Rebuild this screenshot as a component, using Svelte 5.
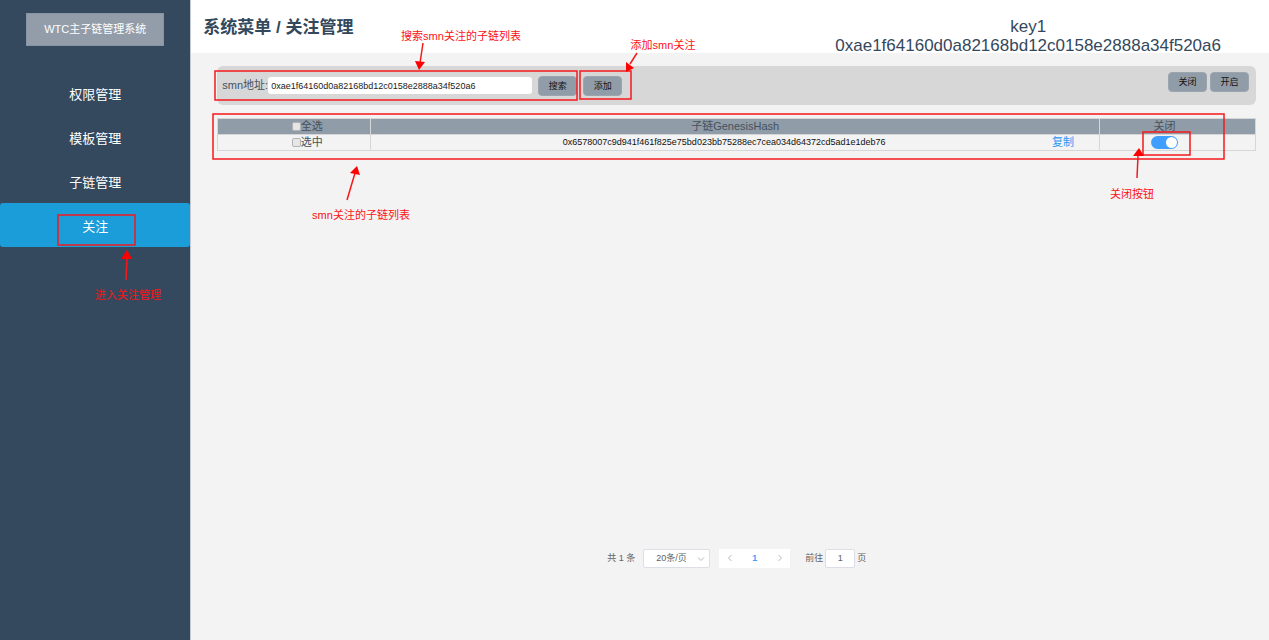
<script>
  const menu = ['权限管理', '模板管理', '子链管理', '关注'];
  let active = $state('关注');
  let address = $state('0xae1f64160d0a82168bd12c0158e2888a34f520a6');
  let pageSize = $state('20条/页');
  let target = $state('1');
  let rows = $state([
    { hash: '0x6578007c9d941f461f825e75bd023bb75288ec7cea034d64372cd5ad1e1deb76', picked: false, on: true }
  ]);

  const boxes = [
    { x: 215, y: 71, w: 362, h: 29 },
    { x: 580, y: 71, w: 51, h: 28 },
    { x: 213, y: 114, w: 1011, h: 45 },
    { x: 1143, y: 132, w: 47, h: 23 },
    { x: 58, y: 215, w: 77, h: 30 }
  ];
  const arrows = [
    { line: 'M423 43 L420 63', head: '415,61 425,62 419,70' },
    { line: 'M637 53 L630 64', head: '626,62 634,68 626,72' },
    { line: 'M347 200 L355 173', head: '350,173 360,175 357,166' },
    { line: 'M1137 178 L1138 156', head: '1133,156 1144,156 1139,148' },
    { line: 'M126 280 L127 258', head: '121,259 132,259 127,250' }
  ];
  const notes = [
    { x: 461, y: 40, text: '搜索smn关注的子链列表' },
    { x: 663, y: 49, text: '添加smn关注' },
    { x: 361, y: 219, text: 'smn关注的子链列表' },
    { x: 1132, y: 198, text: '关闭按钮' },
    { x: 128, y: 299, text: '进入关注管理' }
  ];

  function toggleAll(e) {
    rows.forEach((r) => (r.picked = e.currentTarget.checked));
  }
</script>

<div class="app">
  <aside>
    <div class="brand">WTC主子链管理系统</div>
    <nav>
      {#each menu as item}
        <a href="#menu" class:active={item === active} onclick={() => (active = item)}>{item}</a>
      {/each}
    </nav>
  </aside>

  <main>
    <header>
      <h1>系统菜单 / 关注管理</h1>
      <div class="account">
        <div>key1</div>
        <div>0xae1f64160d0a82168bd12c0158e2888a34f520a6</div>
      </div>
    </header>

    <section class="content">
      <div class="toolbar">
        <form onsubmit={(e) => e.preventDefault()}>
          <label for="address">smn地址:</label>
          <input id="address" type="text" bind:value={address} />
          <button type="submit">搜索</button>
          <button type="button">添加</button>
        </form>
        <div class="bulk">
          <button type="button">关闭</button>
          <button type="button">开启</button>
        </div>
      </div>

      <table>
        <colgroup><col class="c-pick" /><col /><col class="c-switch" /></colgroup>
        <thead>
          <tr>
            <th><label class="pick"><input type="checkbox" onchange={toggleAll} />全选</label></th>
            <th>子链GenesisHash</th>
            <th><span class="off">关闭</span></th>
          </tr>
        </thead>
        <tbody>
          {#each rows as row}
            <tr>
              <td><label class="pick"><input type="checkbox" bind:checked={row.picked} />选中</label></td>
              <td>
                <div class="hash"><span>{row.hash}</span><a href="#copy">复制</a></div>
              </td>
              <td><div class="switch-cell"><input class="switch" type="checkbox" role="switch" aria-label="关闭" bind:checked={row.on} /></div></td>
            </tr>
          {/each}
        </tbody>
      </table>

      <div class="pagination">
        <span class="total">共 1 条</span>
        <div class="size">
          <select aria-label="条/页" bind:value={pageSize}>
            <option>20条/页</option>
          </select>
          <svg width="8" height="8" viewBox="0 0 8 8" aria-hidden="true"><path d="M1 2.5 L4 5.5 L7 2.5" /></svg>
        </div>
        <div class="pager">
          <button type="button" aria-label="‹"><svg width="8" height="8" viewBox="0 0 8 8"><path d="M5.5 1 L2.5 4 L5.5 7" /></svg></button>
          <button type="button" class="current">1</button>
          <button type="button" aria-label="›"><svg width="8" height="8" viewBox="0 0 8 8"><path d="M2.5 1 L5.5 4 L2.5 7" /></svg></button>
        </div>
        <label class="jump">前往<input type="text" bind:value={target} />页</label>
      </div>
    </section>
  </main>

  <div class="notes">
    <svg width="1269" height="640" viewBox="0 0 1269 640">
      {#each boxes as b}
        <rect x={b.x} y={b.y} width={b.w} height={b.h} />
      {/each}
      {#each arrows as a}
        <path d={a.line} />
        <polygon points={a.head} />
      {/each}
      {#each notes as n}
        <text x={n.x} y={n.y}>{n.text}</text>
      {/each}
    </svg>
  </div>
</div>

<style>
  :global(body) {
    margin: 0;
  }
  .app {
    position: relative;
    display: grid;
    grid-template-columns: 15% 1fr;
    min-height: 100vh;
    background: #f3f3f3;
    color: #44525f;
    font: 11px/15px "Liberation Sans", "Noto Sans CJK SC", sans-serif;
  }
  .app * {
    box-sizing: border-box;
  }
  button, input, select {
    font: inherit;
    margin: 0;
    padding: 0;
    border: 0;
  }
  a {
    text-decoration: none;
  }
  aside {
    padding-top: 13px;
    background: #35495e;
    color: #fff;
    text-align: center;
  }
  .brand {
    margin: 0 26px 25px;
    border: 1px solid #8794a2;
    background: #929da9;
    line-height: 31px;
  }
  nav a {
    display: block;
    height: 44px;
    border-radius: 3px;
    color: #fff;
    font-size: 13px;
    line-height: 47px;
  }
  nav a.active {
    background: #1b9dd9;
  }
  main {
    display: flex;
    flex-direction: column;
    min-width: 0;
    border-left: 1px solid #c4cad0;
  }
  header {
    display: flex;
    justify-content: space-between;
    height: 53px;
    padding: 0 48px 0 12px;
    background: #fff;
    color: #34485c;
  }
  h1 {
    margin: 0;
    font-size: 17px;
    line-height: 56px;
  }
  .account {
    padding-top: 17px;
    font-size: 17px;
    line-height: 19px;
    text-align: center;
  }
  .content {
    flex: 1;
    display: flex;
    flex-direction: column;
    padding: 13px 13px 72px 26px;
  }
  .toolbar {
    display: flex;
    justify-content: space-between;
    height: 39px;
    border-radius: 6px;
    background: #d7d7d7;
  }
  form {
    display: flex;
    align-items: center;
    padding-left: 5px;
  }
  form input {
    width: 264px;
    height: 17px;
    margin-right: 6px;
    padding: 0 3px;
    border-radius: 3px;
    background: #fff;
    color: #222;
    font-size: 9px;
  }
  .toolbar button {
    width: 39px;
    height: 20px;
    border: 1px solid #9aa5b0;
    border-radius: 4px;
    background: #909ca8;
    color: #111;
    font-size: 9px;
    line-height: 18px;
  }
  form button + button {
    margin-left: 6px;
  }
  .bulk {
    display: flex;
    gap: 3px;
    padding: 6px 7px;
  }
  table {
    width: 100%;
    margin-top: 13px;
    border-collapse: collapse;
    border: 1px solid #d6d6d6;
    table-layout: fixed;
  }
  .c-pick {
    width: 153px;
  }
  .c-switch {
    width: 156px;
  }
  th, td {
    height: 16px;
    padding: 0;
    border: 1px solid #d6d6d6;
    font-weight: normal;
    text-align: center;
  }
  th {
    background: #909ca8;
  }
  .off {
    padding-right: 26px;
  }
  .pick {
    display: flex;
    align-items: center;
    justify-content: center;
    padding-left: 26px;
  }
  .pick input {
    appearance: none;
    width: 9px;
    height: 9px;
    border: 1px solid #b4b4b4;
    border-radius: 2px;
    background: #e6e6e6;
  }
  .pick input:checked {
    background: #409eff;
  }
  .hash {
    display: flex;
    align-items: center;
    padding: 0 25px;
  }
  .hash span {
    flex: 1;
    color: #111;
    font-size: 9px;
  }
  .hash a {
    color: #1e98f5;
  }
  .switch-cell {
    display: flex;
    justify-content: center;
    padding-right: 26px;
  }
  .switch {
    appearance: none;
    display: flex;
    align-items: center;
    width: 27px;
    height: 13px;
    padding: 0 1px;
    border-radius: 7px;
    background: #c0c4cc;
  }
  .switch::before {
    content: "";
    width: 11px;
    height: 11px;
    border-radius: 50%;
    background: #fff;
  }
  .switch:checked {
    justify-content: flex-end;
    background: #409eff;
  }
  .pagination {
    display: flex;
    justify-content: center;
    align-items: center;
    height: 20px;
    margin-top: auto;
    color: #606266;
    font-size: 9px;
  }
  .size {
    position: relative;
    margin: 0 9px 0 8px;
  }
  .size select {
    appearance: none;
    display: block;
    width: 67px;
    height: 19px;
    padding: 0 12px;
    border: 1px solid #dcdfe6;
    border-radius: 2px;
    background: #fff;
    color: #606266;
  }
  .size svg {
    position: absolute;
    right: 5px;
    top: 6px;
    pointer-events: none;
  }
  .pagination path {
    fill: none;
    stroke: #b4b8c0;
  }
  .pager {
    display: flex;
    margin-right: 15px;
    background: #fff;
  }
  .pager button {
    display: grid;
    place-items: center;
    width: 21px;
    height: 19px;
    background: none;
  }
  .pager .current {
    width: 29px;
    color: #409eff;
    font-weight: bold;
  }
  .jump {
    display: flex;
    align-items: center;
    gap: 2px;
  }
  .jump input {
    width: 30px;
    height: 19px;
    border: 1px solid #dcdfe6;
    border-radius: 2px;
    background: #fff;
    color: #606266;
    text-align: center;
  }
  .notes {
    position: absolute;
    inset: 0;
    overflow: hidden;
    pointer-events: none;
  }
  .notes svg {
    display: block;
  }
  .notes rect, .notes path {
    fill: none;
    stroke: #f5191c;
    stroke-width: 1.5;
  }
  .notes polygon {
    fill: #fe0000;
  }
  .notes text {
    fill: #fb1216;
    text-anchor: middle;
  }
</style>
